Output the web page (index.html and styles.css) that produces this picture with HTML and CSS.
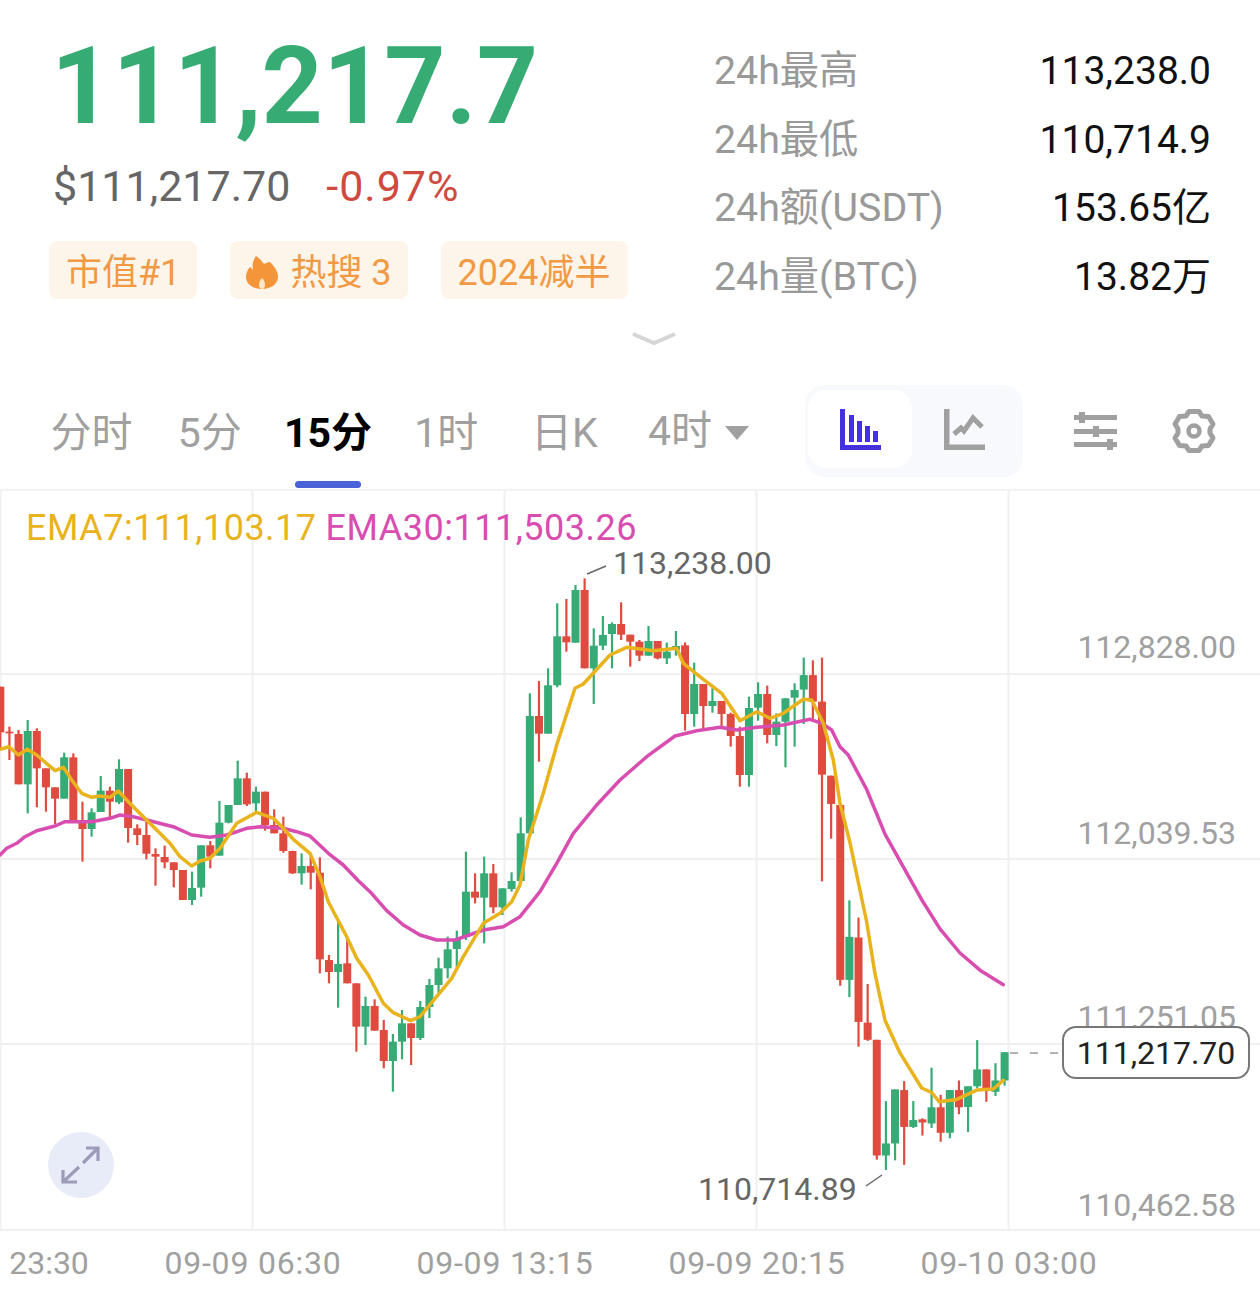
FILE: index.html
```html
<!DOCTYPE html>
<html lang="zh-CN">
<head>
<meta charset="utf-8">
<title>BTC 行情</title>
<link rel="stylesheet" href="styles.css">
</head>
<body>
<main class="page">
  <section class="summary">
    <div class="quote">
      <div class="price">111,217.7</div>
      <div class="subline"><span class="usd">$111,217.70</span><span class="change">-0.97%</span></div>
      <div class="badges">
        <span class="badge badge-rank">市值#1</span>
        <span class="badge badge-hot">
          <svg class="flame" viewBox="0 0 32 33"><path d="M10 0C14 3 16 5 18 8C20 7 22 6 24 6C28 10 32 15 32 21C32 28 25 33 16 33C7 33 0 28 0 21C0 17 2 13 4 11C5 12 6 13 7 14C6 9 7 4 10 0z"/><path class="flame-core" d="M16 22c2 2 3 4 3 7 0 2-1 4-3 4s-3-2-3-4c0-3 1-5 3-7z"/></svg>
          热搜 3
        </span>
        <span class="badge badge-half">2024减半</span>
      </div>
    </div>
    <dl class="stats">
      <div class="stat"><dt>24h最高</dt><dd>113,238.0</dd></div>
      <div class="stat"><dt>24h最低</dt><dd>110,714.9</dd></div>
      <div class="stat"><dt>24h额(USDT)</dt><dd>153.65亿</dd></div>
      <div class="stat"><dt>24h量(BTC)</dt><dd>13.82万</dd></div>
    </dl>
  </section>
  <div class="expand">
    <svg class="chevron" viewBox="0 0 44 14"><path d="M1 2l21 9 21-9"/></svg>
  </div>
  <nav class="toolbar">
    <div class="tabs">
      <span class="tab">分时</span>
      <span class="tab">5分</span>
      <span class="tab tab-active">15分</span>
      <span class="tab">1时</span>
      <span class="tab">日K</span>
      <span class="tab tab-more">4时<i class="caret"></i></span>
    </div>
    <div class="segment">
      <span class="seg seg-active">
        <svg class="icon" viewBox="0 0 41 41"><path fill="#4430dc" d="M0 0h5v36h36v5H0zM9 6h5v27H9zM17 12h5v21h-5zM25 17h5v16h-5zM33 22h5v11h-5z"/></svg>
      </span>
      <span class="seg">
        <svg class="icon" viewBox="0 0 41 41"><path fill="#a0a0a0" d="M0 0h5.500v35.500H41V41H0z"/><path fill="none" stroke="#a0a0a0" stroke-width="5" d="M10 25l7-6 3 3 9-13 9 9"/></svg>
      </span>
    </div>
    <svg class="tool tool-sliders" viewBox="0 0 43 38"><path fill="#a0a0a0" d="M0 3h5V0h6v3h32v5H11v3H5V8H0zM0 17h19v-3h6v3h18v5H25v3h-6v-3H0zM0 30h33v-3h6v3h4v5h-4v3h-6v-3H0z"/></svg>
    <svg class="tool tool-gear" viewBox="0 0 44 44"><path fill="none" stroke="#a0a0a0" stroke-width="5" stroke-linejoin="round" d="M17 2.500h10l3 4.500 6.500.5L41 15l-3 5v4l3 5-4.500 7.500-6.500.5-3 4.500H17L14 37l-6.500-.5L3 29l3-5v-4l-3-5 4.500-7.500L14 7z"/><circle cx="22" cy="22" r="5.500" fill="none" stroke="#a0a0a0" stroke-width="4.500"/></svg>
  </nav>
  <section class="chart">
    <svg id="plot" class="plot" viewBox="0 489 1260 810">
      <path class="grid" d="M0 489.500H1260M0 674H1260M0 859H1260M0 1044H1260M0 1230H1260M.5 489V1230M252.500 489V1230M504.500 489V1230M756.500 489V1230M1008.500 489V1230"/>
      <g id="candles"></g>
      <polyline id="ema30" class="ema ema30"></polyline>
      <polyline id="ema7" class="ema ema7"></polyline>
      <path class="leader" d="M587 574L606 566M866 1186L882 1175"/>
      <path class="last-dash" d="M1010 1053H1058"/>
    </svg>
    <div class="legend"><span class="legend-7">EMA7:111,103.17</span><span class="legend-30">EMA30:111,503.26</span></div>
    <span class="mark mark-high">113,238.00</span>
    <span class="mark mark-low">110,714.89</span>
    <span class="axis-y y1">112,828.00</span>
    <span class="axis-y y2">112,039.53</span>
    <span class="axis-y y3">111,251.05</span>
    <span class="axis-y y4">110,462.58</span>
    <span class="last-price">111,217.70</span>
    <button class="fullscreen" type="button" aria-label="全屏">
      <svg viewBox="0 0 66 66"><circle cx="33" cy="33" r="33" fill="#e8ebf8"/><path fill="none" stroke="#9c9cba" stroke-width="3.200" d="M35 31L50 16M38 16H50V29M15 50L31 35M15 38V50H29"/></svg>
    </button>
    <div class="axis-x">
      <span class="tick tick-0">23:30</span>
      <span class="tick tick-1">09-09 06:30</span>
      <span class="tick tick-2">09-09 13:15</span>
      <span class="tick tick-3">09-09 20:15</span>
      <span class="tick tick-4">09-10 03:00</span>
    </div>
  </section>
</main>
<script src="chart.js"></script>
</body>
</html>
```
FILE: styles.css
```css
* { box-sizing: border-box; }
html, body { margin: 0; padding: 0; background: #fff; }
body { font-family: Roboto, "Noto Sans CJK SC", sans-serif; overflow: hidden; }
.page { width: 1260px; height: 1299px; }

.summary { display: flex; height: 311px; }
.quote { width: 665px; padding-left: 49px; }
.price { margin: 37px 0 0 2px; height: 100px; line-height: 100px; font-size: 107px; font-weight: 700; color: #36ab74; white-space: nowrap; }
.subline { margin: 24px 0 0 4px; height: 50px; line-height: 50px; font-size: 43px; display: flex; gap: 36px; white-space: nowrap; }
.usd { color: #666; }
.change { color: #cf4a3e; letter-spacing: 1px; }
.badges { display: flex; margin-top: 30px; gap: 33px; }
.badge { height: 58px; line-height: 52px; padding: 6px 17px 0; background: #fdf4ea; border-radius: 8px; color: #f19a43; font-size: 36px; white-space: nowrap; display: flex; align-items: center; }
.badge-hot { padding: 6px 16px 0; }
.flame { width: 32px; height: 33px; margin: -2px 12px 0 0; fill: #f4953a; }
.flame-core { fill: #fde6c6; }

.stats { margin: 36px 0 0 49px; width: 497px; }
.stat { display: flex; justify-content: space-between; height: 68.500px; line-height: 70.500px; font-size: 39px; white-space: nowrap; }
.stat dt { color: #999; font-size: 39.300px; }
.stat dd { margin: 0; color: #111; }

.expand { height: 74px; padding: 21px 0 0 632px; }
.chevron { display: block; width: 44px; height: 14px; fill: none; stroke: #d6d6d6; stroke-width: 4; }

.toolbar { display: flex; align-items: center; height: 92px; margin-bottom: 12px; padding-left: 32.500px; }
.tabs { display: flex; align-items: center; width: 772.500px; }
.tab { position: relative; width: 118.200px; height: 48px; line-height: 52px; text-align: center; font-size: 41px; color: #a0a0a0; white-space: nowrap; }
.tab-active { font-weight: 700; color: #000; }
.tab-active::after { content: ""; position: absolute; left: 26px; top: 74px; width: 66px; height: 7px; border-radius: 4px; background: #4a62d8; }
.tab-more { width: auto; padding-left: 24.500px; display: flex; align-items: center; gap: 13px; }
.caret { width: 0; height: 0; margin-top: 4px; border-left: 12px solid transparent; border-right: 12px solid transparent; border-top: 14px solid #a0a0a0; }

.segment { display: flex; width: 218px; height: 92px; padding: 5px 3px; background: #f8f9fc; border-radius: 20px; }
.seg { display: flex; align-items: center; justify-content: center; width: 104px; height: 78px; border-radius: 18px; }
.seg-active { background: #fff; }
.icon { width: 41px; height: 41px; }
.tool { flex: none; }
.tool-sliders { width: 43px; height: 38px; margin-left: 51px; }
.tool-gear { width: 44px; height: 44px; margin-left: 55px; }

.chart { position: relative; height: 810px; }
.plot { position: absolute; left: 0; top: 0; width: 1260px; height: 810px; }
.grid { fill: none; stroke: #f0f0f0; stroke-width: 2; }
.ema { fill: none; stroke-width: 3.500; stroke-linejoin: round; stroke-linecap: round; }
.ema7 { stroke: #e9b31d; }
.ema30 { stroke: #d84db0; }
.leader { fill: none; stroke: #666; stroke-width: 1.500; }
.last-dash { fill: none; stroke: #999; stroke-width: 1.500; stroke-dasharray: 8 12; }

.legend { position: absolute; left: 26px; top: 17px; display: flex; gap: 9px; font-size: 36px; line-height: 44px; letter-spacing: .5px; white-space: nowrap; }
.legend-7 { color: #e9b31d; }
.legend-30 { color: #d84db0; }
.mark, .axis-y, .tick, .last-price { position: absolute; font-size: 32px; line-height: 40px; white-space: nowrap; }
.mark { color: #666; }
.mark-high { left: 613px; top: 54px; }
.mark-low { left: 698px; top: 680px; }
.axis-y { right: 24px; color: #a0a0a0; }
.y1 { top: 138px; }
.y2 { top: 324px; }
.y3 { top: 508px; }
.y4 { top: 696px; }
.last-price { left: 1062px; top: 537px; width: 188px; height: 53px; line-height: 50px; text-align: center; color: #222; background: #fff; border: 2px solid #777; border-radius: 14px; }
.fullscreen { position: absolute; left: 48px; top: 643px; width: 66px; height: 66px; padding: 0; border: 0; background: none; }
.fullscreen svg { display: block; width: 66px; height: 66px; }
.tick { top: 754px; color: #a0a0a0; letter-spacing: .8px; transform: translateX(-50%); }
.tick-0 { left: 49px; letter-spacing: 0; }
.tick-1 { left: 253px; }
.tick-2 { left: 505px; }
.tick-3 { left: 757px; }
.tick-4 { left: 1009px; }
```
FILE: chart.js
```js
// Candles: [high, body-top, body-bottom, low, green?], measured in crops of the plot.
var GREEN = '#36ab76', RED = '#df4b3f';
var X0 = 0.3, STEP = 9.13;
var SCALE_A = 3, SCALE_D = 2.904;
function rows(base, scale, list) {
  return list.map(function (c) {
    return [base + c[0] / scale, base + c[1] / scale, base + c[2] / scale, base + c[3] / scale, c[4]];
  });
}
var a = rows(680, SCALE_A, [
  [20,20,157,205,0],[140,155,160,240,0],[150,162,313,313,0],[120,153,313,400,1],[145,153,265,382,0],
  [265,265,322,395,0],[322,322,356,432,0],[218,232,356,356,1],[220,232,425,425,0],[365,425,447,545,0],
  [385,397,447,470,1],[288,332,396,396,1],[320,332,365,412,0],[238,267,367,372,1],[267,267,444,488,0],
  [433,445,465,495,0],[425,465,521,538,0],[505,522,530,617,0],[497,531,547,565,0],[547,547,570,622,0],
  [570,570,660,660,0],[575,624,660,675,1],[496,496,623,650,1],[483,496,530,565,0],[363,428,527,527,1],
  [375,375,428,430,1],[242,295,375,375,1],[278,295,373,378,0],[320,335,370,395,1],[335,335,435,452,0],
  [388,435,460,460,0],[410,460,513,518,0],[512,513,580,582,0],[520,558,580,614,1],[525,558,578,628,0],
  [532,578,838,880,0],[825,840,876,910,0],[725,852,876,983,1],[778,850,910,910,0],[910,910,1040,1115,0],
  [950,978,1040,1095,1],[958,978,1052,1052,0],[1020,1050,1143,1165,0],[1062,1085,1143,1235,1],[990,1030,1085,1138,1],
  [1030,1030,1074,1155,0]
]);
var b = [[1001,1007,1038,1040,1],[979,985,1007,1018,1]];
var c = rows(560, SCALE_A, [
  [1193,1225,1275,1305,1],[1130,1168,1225,1255,1],[1112,1140,1167,1225,1],[875,995,1130,1140,1],[940,995,1013,1030,0],
  [890,940,1013,1150,1],[912,940,1042,1060,0],[985,985,1042,1065,1],[937,963,987,995,1],[772,820,963,963,1],
  [400,468,820,820,1],[363,468,521,605,0],[325,376,521,521,1],[130,229,376,382,1],[117,229,247,275,0],
  [75,90,248,248,1],[55,90,325,325,0],[205,257,325,432,1],[168,225,257,270,1],[187,192,222,325,1],
  [127,192,224,240,0],[224,224,245,320,0],[240,245,287,303,0],[198,243,287,287,1],[243,243,295,298,0],
  [248,275,295,312,1],[213,258,270,287,1],[247,256,462,512,0],[308,372,462,500,1],[372,372,438,505,0],
  [385,423,438,458,1],[423,423,462,498,0],[458,462,528,560,0],[500,528,645,680,0],[410,444,645,680,1],
  [367,402,443,482,1],[377,402,525,550,0],[460,485,525,558,1],[415,415,485,622,1],[370,390,413,560,1]
]);
var d = rows(650, SCALE_D, [
  [22,73,115,215,1],[30,73,150,200,0],[22,150,362,672,0],[365,365,447,548,0],[450,450,958,975,0],
  [727,833,958,1008,1],[777,835,1080,1152,0],[970,1082,1132,1135,0],[1132,1132,1468,1480,0],[1310,1433,1468,1510,1],
  [1276,1276,1433,1482,1],[1252,1278,1385,1495,0],[1310,1365,1385,1388,1],[1360,1363,1372,1410,0],[1213,1328,1375,1388,1],
  [1292,1328,1402,1428,0],[1278,1278,1402,1418,1],[1250,1278,1328,1348,0],[1267,1267,1327,1400,1],[1133,1218,1267,1272,1],
  [1218,1218,1278,1312,0],[1200,1250,1283,1295,1],[1168,1168,1250,1265,1]
]);
var all = a.concat(b, c, d);
var NS = 'http://www.w3.org/2000/svg';
var group = document.getElementById('candles');
function add(x, y, w, h, fill) {
  var r = document.createElementNS(NS, 'rect');
  r.setAttribute('x', x); r.setAttribute('y', y);
  r.setAttribute('width', w); r.setAttribute('height', Math.max(h, 0));
  r.setAttribute('fill', fill);
  group.appendChild(r);
}
all.forEach(function (k, i) {
  var x = X0 + STEP * i, col = k[4] ? GREEN : RED;
  add(x - 1.1, k[0], 2.2, k[3] - k[0], col);
  add(x - 4, k[1], 8, k[2] - k[1], col);
});

function pts(ox, oy, sy, list) {
  var out = [];
  for (var i = 0; i < list.length; i += 2) {
    out.push((ox + list[i] / 3).toFixed(1) + ',' + (oy + list[i + 1] / sy).toFixed(1));
  }
  return out;
}
var ema30 = pts(0, 680, 3, [0,525,20,505,50,490,75,470,110,452,165,438,195,425,240,425,275,425,330,415,360,405,400,410,440,420,520,440,575,465,630,472,680,465,740,445,780,440,850,445,890,455,930,468,985,520,1030,555,1075,602,1110,635,1160,692,1210,735,1260,765])
  .concat(pts(420, 560, 3, [50,1140,105,1140,190,1110,250,1100,300,1070,360,995,410,910,460,820,530,735,600,660,680,590,765,528,830,512,900,502,950,510,1010,502,1090,495,1170,478,1205,490,1235,510,1260,560]))
  .concat(pts(800, 650, SCALE_D, [145,305,200,405,255,535,310,630,365,725,420,810,480,880,540,930,610,972]));
var ema7 = pts(0, 680, 3, [0,208,27,200,55,225,82,208,110,225,165,272,190,262,215,300,245,340,275,352,300,348,330,352,355,333,385,365,430,410,470,450,510,490,540,530,575,558,600,543,630,535,660,505,710,430,770,397,820,415,850,445,880,478,930,520,960,590,985,665,1040,770,1070,835,1105,885,1150,970,1180,998,1232,1022,1260,1010])
  .concat(pts(420, 560, 3, [95,1255,130,1190,190,1090,240,1060,275,1025,300,975,325,840,370,700,410,555,465,385,490,372,570,285,620,262,700,272,770,265,790,310,850,358,905,400,960,482,1010,455,1050,475,1090,460,1150,418,1175,420,1210,490,1240,600,1260,730]))
  .concat(pts(800, 650, SCALE_D, [150,560,200,790,225,940,255,1075,300,1170,365,1272,395,1285,418,1312,470,1305,530,1278,580,1275,610,1250]));
document.getElementById('ema30').setAttribute('points', ema30.join(' '));
document.getElementById('ema7').setAttribute('points', ema7.join(' '));
```
